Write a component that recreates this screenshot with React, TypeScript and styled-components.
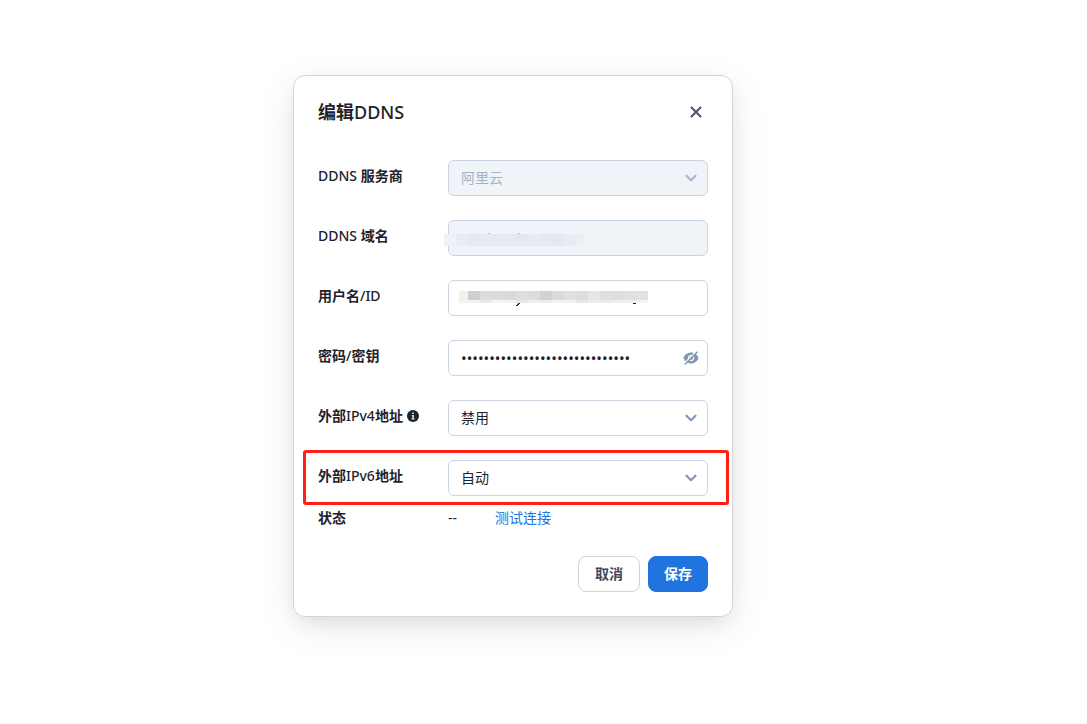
import React, { useState } from 'react';
import styled, { createGlobalStyle } from 'styled-components';

const GlobalStyle = createGlobalStyle`
  *, *::before, *::after { box-sizing: border-box; }
  body {
    margin: 0;
    background: #fff;
    color: #1f2329;
    font-family: "Noto Sans", "Noto Sans CJK SC", sans-serif;
    font-size: 14px;
    line-height: 20px;
  }
  button, input, select { font: inherit; color: inherit; margin: 0; }
`;

const Page = styled.main`
  display: flex;
  justify-content: center;
  padding: 75px 61px 75px 0;
`;

const Dialog = styled.form`
  width: 100%;
  max-width: 440px;
  padding: 24px;
  border: 1px solid #d3d4d5;
  border-radius: 12px;
  background: #fff;
  box-shadow: 0 10px 40px rgba(0, 0, 0, 0.08), 0 8px 20px -4px rgba(0, 0, 0, 0.09);
`;

const Header = styled.header`
  display: flex;
  align-items: center;
  justify-content: space-between;
  height: 24px;
  margin-bottom: 36px;
`;

const Title = styled.h1`
  margin: 0;
  font-size: 18px;
  line-height: 24px;
  font-weight: 500;
`;

const IconButton = styled.button`
  display: flex;
  align-items: center;
  justify-content: center;
  width: 24px;
  height: 24px;
  padding: 0;
  border: 0;
  background: none;
  color: #475467;
  cursor: pointer;
`;

const Fields = styled.div`
  display: flex;
  flex-direction: column;
  gap: 24px;
`;

const Row = styled.div`
  position: relative;
  display: grid;
  grid-template-columns: 130px 1fr;
  align-items: start;
`;

const Label = styled.label`
  display: flex;
  align-items: center;
  gap: 4px;
  line-height: 32px;
  font-weight: 500;
`;

const Control = styled.div`
  position: relative;
  height: 36px;
`;

const fieldLook = `
  display: block;
  width: 100%;
  height: 36px;
  border: 1px solid #cbd5e1;
  border-radius: 6px;
  background: #fff;
  outline: none;
  &:disabled {
    background: #f0f3f8;
    color: #a3b3c9;
    opacity: 1;
  }
`;

const Select = styled.select`
  ${fieldLook}
  appearance: none;
  padding: 0 36px 0 12px;
`;

const Input = styled.input<{ $masked?: boolean }>`
  ${fieldLook}
  padding: 0 36px 0 12px;
  font-size: ${p => (p.$masked ? 15 : 14)}px;
`;

const Trailing = styled.span<{ $muted?: boolean }>`
  position: absolute;
  top: 0;
  right: 5px;
  display: flex;
  align-items: center;
  justify-content: center;
  width: 24px;
  height: 36px;
  color: ${p => (p.$muted ? '#a9b9ce' : '#8496b0')};
  pointer-events: none;
  button { pointer-events: auto; color: inherit; }
`;

const Mosaic = styled.svg<{ $left: number; $top: number }>`
  position: absolute;
  left: ${p => p.$left}px;
  top: ${p => p.$top}px;
  pointer-events: none;
`;

const Highlight = styled.span`
  position: absolute;
  inset: -10px -21px -9px -15px;
  border: 3px solid #ff2116;
  border-radius: 3px;
  pointer-events: none;
`;

const StatusRow = styled(Row)`
  margin-top: 12px;
  line-height: 20px;
`;

const StatusName = styled.span`
  font-weight: 700;
`;

const StatusValue = styled.div`
  display: flex;
  gap: 38px;
`;

const TestLink = styled.a`
  color: #2173df;
  text-decoration: none;
`;

const Footer = styled.footer`
  display: flex;
  justify-content: flex-end;
  gap: 8px;
  margin-top: 28px;
`;

const Button = styled.button<{ $primary?: boolean }>`
  height: 36px;
  padding: 0 ${p => (p.$primary ? 15 : 16)}px;
  border: 1px solid ${p => (p.$primary ? '#2173df' : '#cbd5e1')};
  border-radius: 8px;
  background: ${p => (p.$primary ? '#2173df' : '#fff')};
  color: ${p => (p.$primary ? '#fff' : '#3f4a5a')};
  font-weight: 700;
  cursor: pointer;
`;

const Strong = styled.b`
  font-weight: 700;
`;

/* Chinese runs are set bold, Latin runs keep the medium weight around them. */
const Mixed = ({ text }: { text: string }) => (
  <span>
    {text.split(/([\u4e00-\u9fff]+)/).filter(Boolean).map((run, i) =>
      /[\u4e00-\u9fff]/.test(run) ? <Strong key={i}>{run}</Strong> : run
    )}
  </span>
);

const Chevron = () => (
  <svg width="12" height="8" viewBox="0 0 12 8" fill="none" stroke="currentColor" strokeWidth="2.2" strokeLinecap="round" strokeLinejoin="round" aria-hidden="true">
    <path d="M1.5 1.700 6 6.200l4.500-4.500" />
  </svg>
);

const CloseIcon = () => (
  <svg width="12" height="12" viewBox="0 0 12 12" fill="none" stroke="currentColor" strokeWidth="2" strokeLinecap="round" aria-hidden="true">
    <path d="M1.500 1.500 10.500 10.500M10.500 1.500 1.500 10.500" />
  </svg>
);

const InfoIcon = () => (
  <svg width="12" height="12" viewBox="0 0 12 12" aria-hidden="true">
    <circle cx="6" cy="6" r="6" fill="#1f2329" />
    <path d="M5.100 2.500h1.800v1.500H5.100zM4.700 5h2.200v3.500h.7v.9H4.400v-.9h.8V5.900h-.5z" fill="#dcdddf" />
  </svg>
);

const EyeOffIcon = () => (
  <svg width="16" height="14" viewBox="0 0 16 14" fill="none" aria-hidden="true">
    <path
      fillRule="evenodd"
      d="M8 1.500C4.300 1.500 1.600 3.800.500 7 1.600 10.200 4.300 12.500 8 12.500s6.400-2.300 7.500-5.500C14.400 3.800 11.700 1.500 8 1.500ZM8 3.900a3.100 3.100 0 1 1 0 6.200 3.100 3.100 0 0 1 0-6.200Z"
      fill="currentColor"
    />
    <circle cx="8" cy="7" r="2" fill="currentColor" />
    <path d="M1 12.700 13.300.400" stroke="#fff" strokeWidth="1.500" />
    <path d="M2.200 13 14 1.200" stroke="currentColor" strokeWidth="1.600" strokeLinecap="round" />
  </svg>
);

const domainTop = ['#edf3f8', '#e6eaf3', '#e5e8f0', '#e5e9f1', '#e6e9f0', '#e6e9f2', '#e2e6f1', '#e7ebf2', '#e5e8ef', '#e5e8ef', '#e9edf3', '#ebeff5'];
const domainBottom = ['#edf3f8', '#e9edf6', '#e6e9ef', '#e7eaf0', '#e6eaf1', '#e6e9ef', '#e7eaf0', '#e7eaf0', '#e7eaf0', '#e1e8f2', '#e8ecf2', '#edf0f6'];
const userTop = ['#f1f1f0', '#cfcfd0', '#dcdcdc', '#dcdcdd', '#d8d9da', '#dedede', '#dcdcdd', '#d0d1d3', '#dadad8', '#e0e0e1', '#dcdddf', '#e4e7e6', '#dfdfdf', '#dddee0', '#e0e0e0', '#e2e2e2'];
const userBottom = ['#f3f3f3', '#f3f3f3', '#e9e9e9', '#f5f5f5', '#f2f2f2', '#e6e6e6', '#eeeeee', '#ececec', '#f1f1f1', '#f1f1f1', '#e6e6e7', '#ededee', '#eaeaea', '#efeff0', '#efefef', '#f4f4f4'];

const DomainMosaic = () => (
  <Mosaic $left={-4} $top={13} width="141" height="13" shapeRendering="crispEdges" aria-hidden="true">
    {domainTop.map((c, i) => <rect key={i} x={i * 12} y="1" width="12" height="6" fill={c} />)}
    {domainBottom.map((c, i) => <rect key={i} x={i * 12} y="7" width="12" height="6" fill={c} />)}
    <rect x="44" y="0" width="2" height="1" fill="#b9c2d0" />
    <rect x="74" y="0" width="2" height="1" fill="#b9c2d0" />
  </Mosaic>
);

const UserMosaic = () => (
  <Mosaic $left={11} $top={11} width="190" height="15" shapeRendering="crispEdges" aria-hidden="true">
    {userTop.map((c, i) => <rect key={i} x={i ? i * 12 - 3 : 0} y="0" width={i ? 12 : 9} height="9" fill={c} />)}
    {userBottom.map((c, i) => <rect key={i} x={i ? i * 12 - 3 : 0} y="9" width={i ? 12 : 9} height="3" fill={c} />)}
    <path d="M59 12h2v1h-1v1h-1v1h-2v-1h1v-1h1z" fill="#2b2f3b" />
    <path d="M174 12h3v1h-3z" fill="#1f2329" />
  </Mosaic>
);

interface PickerProps {
  id: string;
  label: string;
  options: string[];
  disabled?: boolean;
  info?: boolean;
  highlighted?: boolean;
}

const PickerRow = ({ id, label, options, disabled, info, highlighted }: PickerProps) => (
  <Row>
    <Label htmlFor={id}><Mixed text={label} />{info && <InfoIcon />}</Label>
    <Control>
      <Select id={id} disabled={disabled}>
        {options.map(o => <option key={o}>{o}</option>)}
      </Select>
      <Trailing $muted={disabled}><Chevron /></Trailing>
    </Control>
    {highlighted && <Highlight />}
  </Row>
);

export default function App() {
  const [visible, setVisible] = useState(false);
  return (
    <>
      <GlobalStyle />
      <Page>
        <Dialog role="dialog" aria-labelledby="dialog-title" onSubmit={e => e.preventDefault()}>
          <Header>
            <Title id="dialog-title"><Mixed text="编辑DDNS" /></Title>
            <IconButton type="button" aria-label="关闭"><CloseIcon /></IconButton>
          </Header>
          <Fields>
            <PickerRow id="provider" label="DDNS 服务商" options={['阿里云']} disabled />
            <Row>
              <Label htmlFor="domain"><Mixed text="DDNS 域名" /></Label>
              <Control>
                <Input id="domain" disabled />
                <DomainMosaic />
              </Control>
            </Row>
            <Row>
              <Label htmlFor="user"><Mixed text="用户名/ID" /></Label>
              <Control>
                <Input id="user" autoComplete="off" />
                <UserMosaic />
              </Control>
            </Row>
            <Row>
              <Label htmlFor="secret"><Mixed text="密码/密钥" /></Label>
              <Control>
                <Input id="secret" $masked type={visible ? 'text' : 'password'} defaultValue={'0'.repeat(30)} autoComplete="off" />
                <Trailing>
                  <IconButton type="button" aria-label="显示密码" onClick={() => setVisible(!visible)}><EyeOffIcon /></IconButton>
                </Trailing>
              </Control>
            </Row>
            <PickerRow id="ipv4" label="外部IPv4地址" options={['禁用', '自动']} info />
            <PickerRow id="ipv6" label="外部IPv6地址" options={['自动', '禁用']} highlighted />
          </Fields>
          <StatusRow>
            <StatusName>状态</StatusName>
            <StatusValue>
              <span>--</span>
              <TestLink href="#test">测试连接</TestLink>
            </StatusValue>
          </StatusRow>
          <Footer>
            <Button type="button">取消</Button>
            <Button type="submit" $primary>保存</Button>
          </Footer>
        </Dialog>
      </Page>
    </>
  );
}
